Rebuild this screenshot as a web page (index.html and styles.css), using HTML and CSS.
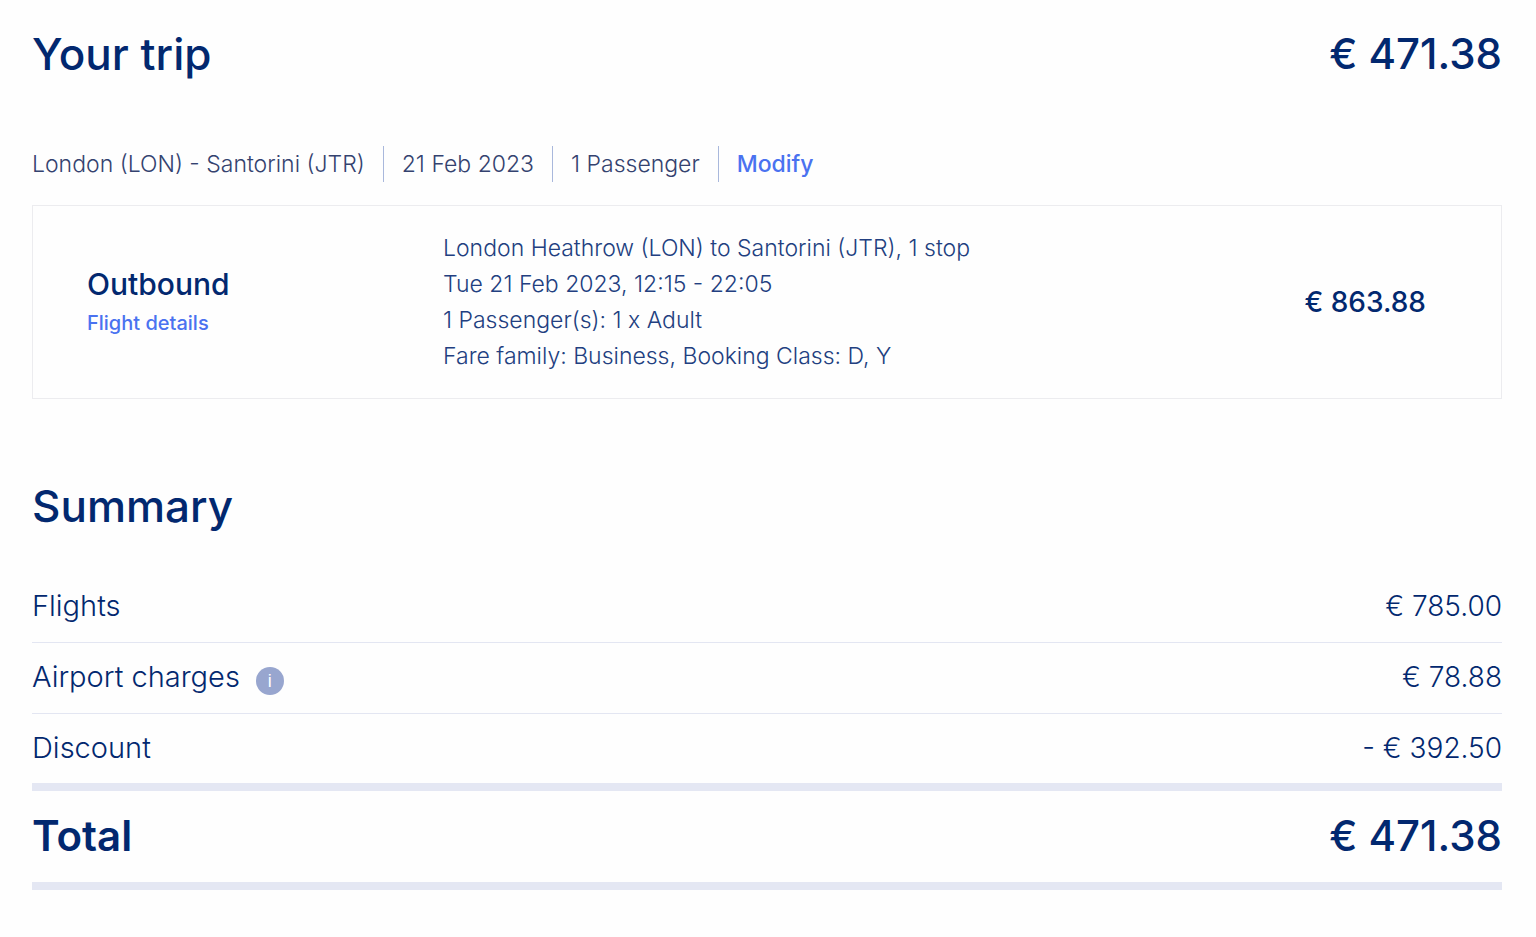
FILE: index.html
```
<!DOCTYPE html>
<html lang="en">
<head>
  <meta charset="UTF-8">
  <meta name="viewport" content="width=device-width, initial-scale=1.0">
  <title>Your trip</title>
  <link rel="stylesheet" href="styles.css">
</head>
<body>
  <main class="page">
    <header class="trip-header">
      <h1>Your trip</h1>
      <span class="trip-price">€ 471.38</span>
    </header>

    <div class="search-info">
      <span>London (LON) - Santorini (JTR)</span>
      <span>21 Feb 2023</span>
      <span>1 Passenger</span>
      <a href="#">Modify</a>
    </div>

    <section class="flight-card">
      <div class="flight-direction">
        <h3>Outbound</h3>
        <a href="#">Flight details</a>
      </div>
      <div class="flight-info">
        <p>London Heathrow (LON) to Santorini (JTR), 1 stop</p>
        <p>Tue 21 Feb 2023, 12:15 - 22:05</p>
        <p>1 Passenger(s): 1 x Adult</p>
        <p>Fare family: Business, Booking Class: D, Y</p>
      </div>
      <span class="flight-price">€ 863.88</span>
    </section>

    <h2>Summary</h2>
    <table class="summary">
      <tbody>
        <tr>
          <th scope="row">Flights</th>
          <td>€ 785.00</td>
        </tr>
        <tr>
          <th scope="row">
            <div class="label">Airport charges <button class="info" type="button" aria-label="About airport charges">i</button></div>
          </th>
          <td>€ 78.88</td>
        </tr>
        <tr>
          <th scope="row">Discount</th>
          <td>- € 392.50</td>
        </tr>
      </tbody>
      <tfoot>
        <tr>
          <th scope="row">Total</th>
          <td>€ 471.38</td>
        </tr>
      </tfoot>
    </table>
  </main>
</body>
</html>
```
FILE: styles.css
```
* { box-sizing: border-box; }
body {
  margin: 0;
  background: #fefefe;
  color: #02286f;
  font-family: Inter, "Open Sans", sans-serif;
  font-weight: 300;
}
h1, h2, h3, p { margin: 0; }
a {
  color: #4a72f0;
  font-weight: 500;
  text-decoration: none;
}
a:hover { text-decoration: underline; }
.page { padding: 24px 34px 40px 32px; }

.trip-header {
  display: flex;
  justify-content: space-between;
  align-items: center;
}
h1, h2 {
  font-size: 44px;
  line-height: 60px;
  font-weight: 500;
}
.trip-price {
  font-size: 42px;
  line-height: 60px;
  font-weight: 500;
}

.search-info {
  display: flex;
  margin-top: 62px;
  font-size: 23px;
  line-height: 36px;
  color: #34426f;
}
.search-info span {
  padding-right: 18px;
  margin-right: 18px;
  border-right: 1px solid #a9b8dc;
}

.flight-card {
  display: grid;
  grid-template-columns: 356px 1fr auto;
  align-items: center;
  margin-top: 23px;
  padding: 24px 75px 24px 54px;
  border: 1px solid #ececef;
}
.flight-direction h3 {
  font-size: 30px;
  line-height: 42px;
  font-weight: 500;
}
.flight-direction a {
  display: block;
  font-size: 20px;
  line-height: 36px;
}
.flight-info {
  font-size: 23px;
  line-height: 36px;
  color: #223f80;
}
.flight-price {
  font-size: 28px;
  line-height: 36px;
  font-weight: 500;
}

h2 { margin-top: 77px; }
.summary {
  width: 100%;
  margin-top: 36px;
  border-collapse: separate;
  border-spacing: 0;
}
.summary th, .summary td {
  height: 71px;
  padding: 0 0 2px;
  border-bottom: 1px solid #e3e6f2;
  font-size: 28px;
  line-height: 36px;
  font-weight: 300;
  text-align: left;
}
.summary th { font-size: 29px; }
.summary td { text-align: right; }
.summary tbody tr:last-child > * {
  height: 77px;
  border-bottom: 8px solid #e4e7f3;
}
.summary tfoot th, .summary tfoot td {
  height: 99px;
  border-bottom: 8px solid #e4e7f3;
  font-size: 42px;
  font-weight: 500;
}
.summary tfoot th { font-weight: 600; }
.label {
  display: flex;
  align-items: flex-end;
  gap: 16px;
}
.info {
  width: 28px;
  height: 28px;
  padding: 0;
  border: none;
  border-radius: 50%;
  background: #98a6cf;
  color: white;
  font: 18px/28px "Liberation Sans", Arial, sans-serif;
  cursor: pointer;
}
```
